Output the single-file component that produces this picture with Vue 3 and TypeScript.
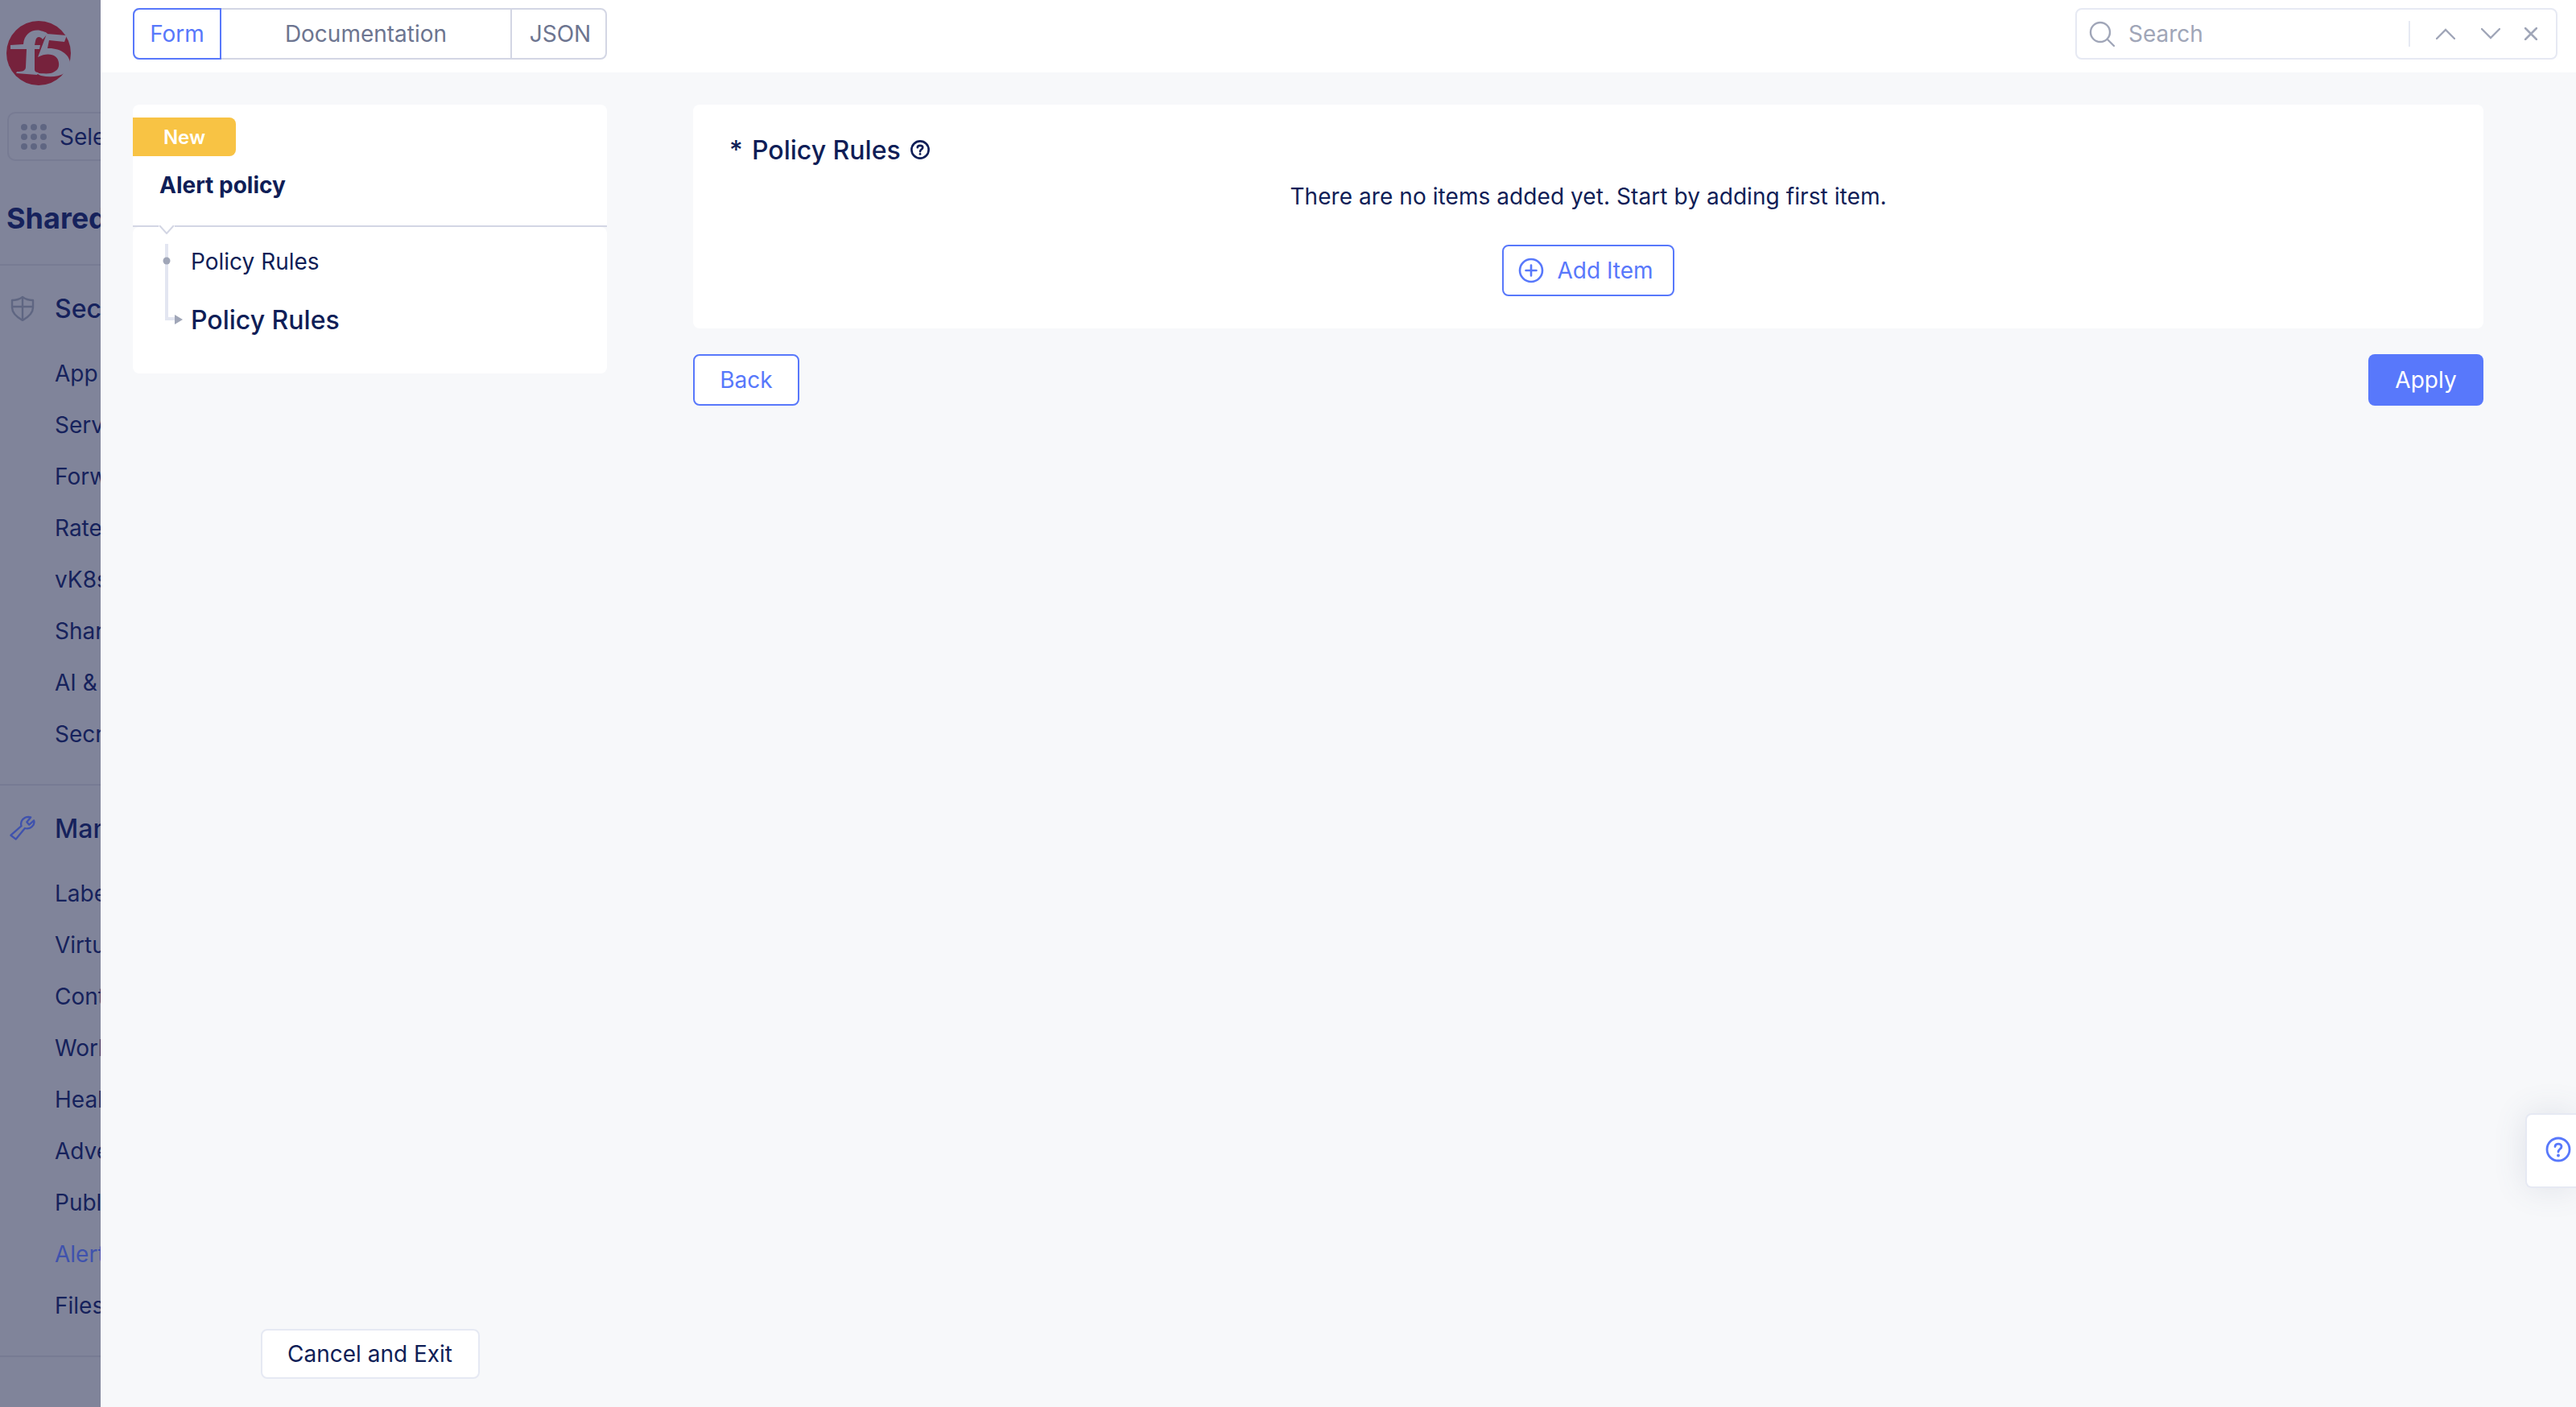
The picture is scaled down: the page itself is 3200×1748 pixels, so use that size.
<script setup lang="ts">
const securityItems = [
  'App Firewall',
  'Service Policies',
  'Forward Proxy Policies',
  'Rate Limiter Policies',
  'vK8s Service Policies',
  'Shared Objects',
  'AI & Automation',
  'Secrets',
];

const manageItems = [
  'Labels',
  'Virtual Sites',
  'Content Delivery',
  'Workloads',
  'Health Checks',
  'Advertise Policies',
  'Public IPs',
  'Alert Policies',
  'Files',
];

const activeItem = 'Alert Policies';
const dots = Array.from({ length: 9 }, (_, i) => i);
</script>

<template>
  <div class="page">
    <aside class="sidebar">
      <svg class="logo" viewBox="0 0 80 80" aria-label="F5">
        <circle cx="40" cy="40" r="40" fill="#76223c" />
        <path
          fill="#80849a"
          d="M5 30 L21 29 C22 16 32 10 42 12 C46 13 50 14 51 16 L45 23 C41 18 37 20 36 25 L35 30 L42 30 L41 35 L35 35 L35 60 C35 63 37 64 40 64 L38 67 L12 65 L13 63 C20 63 24 62 24 57 L25 35 L5 35 Z"
        />
        <path
          fill="#80849a"
          d="M50 16 L75 18 L72 26 L53 24 L51 34 C66 33 80 42 79 54 C78 66 62 72 43 68 C40 67 39 66 38 65 C42 65 50 66 55 65 C62 63 66 59 65 52 C64 42 52 38 39 45 Z"
        />
      </svg>

      <div class="select-box">
        <div class="dot-grid">
          <span v-for="d in dots" :key="d" class="dot"></span>
        </div>
        <span class="select-text">Select</span>
      </div>

      <div class="workspace-title">Shared Configuration</div>

      <section class="nav-section">
        <div class="nav-head">
          <svg class="nav-icon" viewBox="0 0 32 32" fill="none" stroke="#5f6682" stroke-width="2.4">
            <path d="M16 2 C20 5 25 6 29 6 V15 C29 22 23 27 16 31 C9 27 3 22 3 15 V6 C7 6 12 5 16 2 Z" stroke-linejoin="round" />
            <path d="M16 2 V31 M3 14 H29" />
          </svg>
          <span>Security</span>
        </div>
        <div v-for="item in securityItems" :key="item" class="nav-item">{{ item }}</div>
      </section>

      <section class="nav-section">
        <div class="nav-head">
          <svg class="nav-icon" viewBox="0 0 33 32" fill="none" stroke="#3f52ad" stroke-width="2.4" stroke-linejoin="round">
            <path d="M1.5 25 L15 13 C13 7 18 1.5 24 1.5 L27 2 L22 8 L25 11.5 L31 6 C33 12 26 18 19.5 16 L8 30 Z" />
          </svg>
          <span>Manage</span>
        </div>
        <div
          v-for="item in manageItems"
          :key="item"
          class="nav-item"
          :class="{ active: item === activeItem }"
        >
          {{ item }}
        </div>
      </section>
    </aside>

    <div class="content">
      <header class="topbar">
        <div class="tabs">
          <div class="tab tab-form">Form</div>
          <div class="tab tab-docs">Documentation</div>
          <div class="tab tab-json">JSON</div>
        </div>
        <div class="search">
          <svg class="search-icon" viewBox="0 0 32 32" fill="none" stroke="#a0a6b8" stroke-width="2.4" stroke-linecap="round">
            <circle cx="14" cy="14" r="12" />
            <path d="M23 23 L31 31" />
          </svg>
          <span class="search-text">Search</span>
          <span class="search-sep"></span>
          <svg class="chev chev-up" viewBox="0 0 24 14" fill="none" stroke="#a0a6b8" stroke-width="2.4" stroke-linecap="round">
            <path d="M1 13 L12 2 L23 13" />
          </svg>
          <svg class="chev chev-down" viewBox="0 0 24 14" fill="none" stroke="#a0a6b8" stroke-width="2.4" stroke-linecap="round">
            <path d="M1 1 L12 12 L23 1" />
          </svg>
          <svg class="close" viewBox="0 0 16 16" fill="none" stroke="#a0a6b8" stroke-width="2.6" stroke-linecap="round">
            <path d="M1 1 L15 15 M15 1 L1 15" />
          </svg>
        </div>
      </header>

      <main class="body">
        <div class="left-col">
          <div class="side-card">
            <div class="side-head">
              <span class="badge">New</span>
              <h2 class="side-title">Alert policy</h2>
              <svg class="notch" viewBox="0 0 20 11" fill="none" stroke="#d3d6e4" stroke-width="2">
                <path d="M1 0 L10 10 L19 0" />
              </svg>
            </div>
            <nav class="side-nav">
              <svg class="connector" viewBox="0 0 28 104">
                <path d="M6 0 V93 H18" fill="none" stroke="#e3e6f1" stroke-width="4" />
                <circle cx="6" cy="21" r="4.5" fill="#a0a6b8" />
                <path d="M16 88 L26 94 L16 100 Z" fill="#a0a6b8" />
              </svg>
              <a class="step">Policy Rules</a>
              <a class="step step-active">Policy Rules</a>
            </nav>
          </div>
          <button class="btn-cancel" type="button">Cancel and Exit</button>
        </div>

        <div class="main-col">
          <section class="rules-card">
            <div class="rules-head">
              <span class="required">*</span>
              <span class="rules-title">Policy Rules</span>
              <svg class="help-small" viewBox="0 0 24 24" fill="none" stroke="#0f1e57" stroke-width="2.4">
                <circle cx="12" cy="12" r="9.8" />
                <path d="M9 9.5 C9 6.5 15 6.5 15 9.5 C15 11.5 12 11.5 12 14" stroke-linecap="round" />
                <circle cx="12" cy="17" r="1.3" fill="#0f1e57" stroke="none" />
              </svg>
            </div>
            <p class="empty-text">There are no items added yet. Start by adding first item.</p>
            <button class="btn btn-outline btn-add" type="button">
              <svg class="plus" viewBox="0 0 32 32" fill="none" stroke="#5878fb" stroke-width="2.6" stroke-linecap="round">
                <circle cx="16" cy="16" r="14" />
                <path d="M16 9.5 V22.5 M9.5 16 H22.5" />
              </svg>
              Add Item
            </button>
          </section>
          <div class="actions">
            <button class="btn btn-outline btn-back" type="button">Back</button>
            <button class="btn btn-apply" type="button">Apply</button>
          </div>
        </div>
      </main>
    </div>

    <button class="help-tab" type="button" aria-label="Help">
      <svg viewBox="0 0 32 32" fill="none" stroke="#5878fb" stroke-width="2.8">
        <circle cx="16" cy="16" r="14" />
        <path d="M12 12.5 C12 8 20 8 20 12.5 C20 15.5 16 15.5 16 19" stroke-linecap="round" />
        <circle cx="16" cy="23.5" r="1.9" fill="#5878fb" stroke="none" />
      </svg>
    </button>
  </div>
</template>

<style scoped>
.page {
  position: relative;
  display: flex;
  width: 3200px;
  height: 1748px;
  overflow: hidden;
  background: #f7f8fa;
  color: #0f1e57;
  font-family: Inter, "Noto Sans", sans-serif;
  font-size: 28px;
}

/* Sidebar sits dimmed behind the drawer */
.sidebar {
  flex: 0 0 125px;
  width: 125px;
  height: 1748px;
  overflow: hidden;
  background: #80849a;
  color: #16225c;
  white-space: nowrap;
}

.logo {
  display: block;
  width: 80px;
  height: 80px;
  margin: 26px 0 0 8px;
}

.select-box {
  display: flex;
  align-items: center;
  gap: 16px;
  width: 300px;
  height: 61px;
  margin: 33px 0 0 9px;
  padding-left: 15px;
  box-sizing: border-box;
  border: 2px solid #777b93;
  border-radius: 10px;
}

.dot-grid {
  display: grid;
  grid-template-columns: repeat(3, 8px);
  gap: 4px;
}

.dot-grid .dot {
  width: 8px;
  height: 8px;
  border-radius: 50%;
  background: #5f6682;
}

.workspace-title {
  height: 130px;
  padding-left: 8px;
  font-size: 36px;
  font-weight: 700;
  line-height: 142px;
  box-sizing: border-box;
  border-bottom: 2px solid #777b93;
}

.nav-section {
  padding: 21px 0 30px;
  border-bottom: 2px solid #777b93;
}

.nav-head {
  display: flex;
  align-items: center;
  height: 64px;
  margin-bottom: 17px;
  padding-left: 12px;
  font-size: 32px;
  font-weight: 500;
}

.nav-icon {
  flex: 0 0 32px;
  width: 32px;
  height: 32px;
  margin-right: 24px;
}

.nav-item {
  height: 64px;
  padding-left: 68px;
  line-height: 64px;
}

.nav-item.active {
  color: #3f52ad;
}

/* Main column */
.content {
  flex: 1;
  display: flex;
  flex-direction: column;
  min-width: 0;
}

.topbar {
  display: flex;
  align-items: center;
  justify-content: space-between;
  height: 90px;
  padding: 0 23px 6px 40px;
  box-sizing: border-box;
  background: #fff;
}

.tabs {
  display: flex;
  height: 64px;
  box-sizing: border-box;
  border: 2px solid #d3d6e4;
  border-radius: 8px;
  color: #6d7590;
}

.tab {
  display: flex;
  align-items: center;
  justify-content: center;
  box-sizing: border-box;
}

.tab-form {
  width: 110px;
  margin: -2px 0 -2px -2px;
  border: 2px solid #5878fb;
  border-radius: 8px 0 0 8px;
  color: #5878fb;
}

.tab-docs {
  width: 361px;
  border-right: 2px solid #d3d6e4;
}

.tab-json {
  width: 116px;
  padding-left: 4px;
}

.search {
  display: flex;
  align-items: center;
  width: 599px;
  height: 64px;
  padding-left: 15px;
  box-sizing: border-box;
  border: 2px solid #e6e9f3;
  border-radius: 8px;
  color: #a0a6b8;
}

.search-icon {
  width: 32px;
  height: 32px;
  margin-right: 17px;
}

.search-text {
  flex: 1;
}

.search-sep {
  width: 2px;
  height: 32px;
  margin-right: 32px;
  background: #e6e9f3;
}

.chev {
  width: 24px;
  height: 14px;
}

.chev-up {
  margin-right: 32px;
}

.chev-down {
  margin-right: 30px;
}

.close {
  width: 16px;
  height: 16px;
  margin-right: 23px;
}

.body {
  flex: 1;
  display: flex;
  gap: 107px;
  padding: 40px 115px 35px 40px;
  min-height: 0;
}

.left-col {
  flex: 0 0 589px;
  display: flex;
  flex-direction: column;
  align-items: center;
  justify-content: space-between;
}

.side-card {
  display: flex;
  flex-direction: column;
  align-self: stretch;
  height: 334px;
}

.side-head {
  position: relative;
  height: 152px;
  padding-top: 16px;
  box-sizing: border-box;
  border-bottom: 2px solid #d3d6e4;
  border-radius: 8px 8px 0 0;
  background: #fff;
}

.badge {
  display: flex;
  align-items: center;
  justify-content: center;
  width: 128px;
  height: 48px;
  border-radius: 0 8px 8px 0;
  background: #f8c344;
  color: #fff;
  font-size: 24px;
  font-weight: 600;
}

.side-title {
  margin: 16px 0 0 33px;
  font-size: 28px;
  font-weight: 700;
  line-height: 40px;
}

.notch {
  position: absolute;
  z-index: 1;
  left: 32px;
  bottom: -11px;
  width: 20px;
  height: 11px;
  background: #fff;
}

.side-nav {
  position: relative;
  flex: 1;
  display: flex;
  flex-direction: column;
  padding: 21px 0 0 72px;
  border-radius: 8px;
  background: #fff;
}

.connector {
  position: absolute;
  top: 21px;
  left: 36px;
  width: 28px;
  height: 104px;
}

.step {
  height: 44px;
  line-height: 44px;
}

.step-active {
  margin-top: 29px;
  font-size: 32px;
  font-weight: 500;
}

.btn-cancel {
  width: 272px;
  height: 62px;
  border: 2px solid #e6e9f3;
  border-radius: 8px;
  background: #fff;
  color: #0f1e57;
  font: inherit;
}

.main-col {
  flex: 1;
  min-width: 0;
}

.rules-card {
  display: flex;
  flex-direction: column;
  align-items: center;
  height: 278px;
  border-radius: 8px;
  background: #fff;
}

.rules-head {
  display: flex;
  align-items: center;
  align-self: flex-start;
  height: 40px;
  margin: 36px 0 0 45px;
  font-size: 32px;
  font-weight: 500;
}

.required {
  width: 28px;
}

.help-small {
  width: 26px;
  height: 26px;
  margin-left: 11px;
}

.empty-text {
  margin: 18px 0 0;
  line-height: 40px;
  letter-spacing: 0.07px;
}

.btn {
  display: inline-flex;
  align-items: center;
  justify-content: center;
  height: 64px;
  box-sizing: border-box;
  border-radius: 8px;
  font: inherit;
}

.btn-outline {
  border: 2px solid #5878fb;
  background: #fff;
  color: #5878fb;
}

.btn-add {
  width: 214px;
  margin-top: 40px;
  padding: 0 6px 0 0;
}

.plus {
  width: 32px;
  height: 32px;
  margin-right: 16px;
}

.actions {
  display: flex;
  justify-content: space-between;
  margin-top: 32px;
}

.btn-back {
  width: 132px;
}

.btn-apply {
  width: 143px;
  border: 0;
  background: #5878fb;
  color: #fff;
}

/* Floating help tab on the right edge */
.help-tab {
  position: absolute;
  top: 1383px;
  right: 0;
  display: flex;
  align-items: center;
  width: 63px;
  height: 93px;
  padding: 0 0 3px 23px;
  box-sizing: border-box;
  border: 2px solid #e6e9f3;
  border-right: 0;
  border-radius: 8px 0 0 8px;
  background: #fff;
  box-shadow: 0 0 40px rgba(80, 90, 130, 0.14);
}

.help-tab svg {
  flex: 0 0 32px;
  width: 32px;
  height: 32px;
}
</style>
